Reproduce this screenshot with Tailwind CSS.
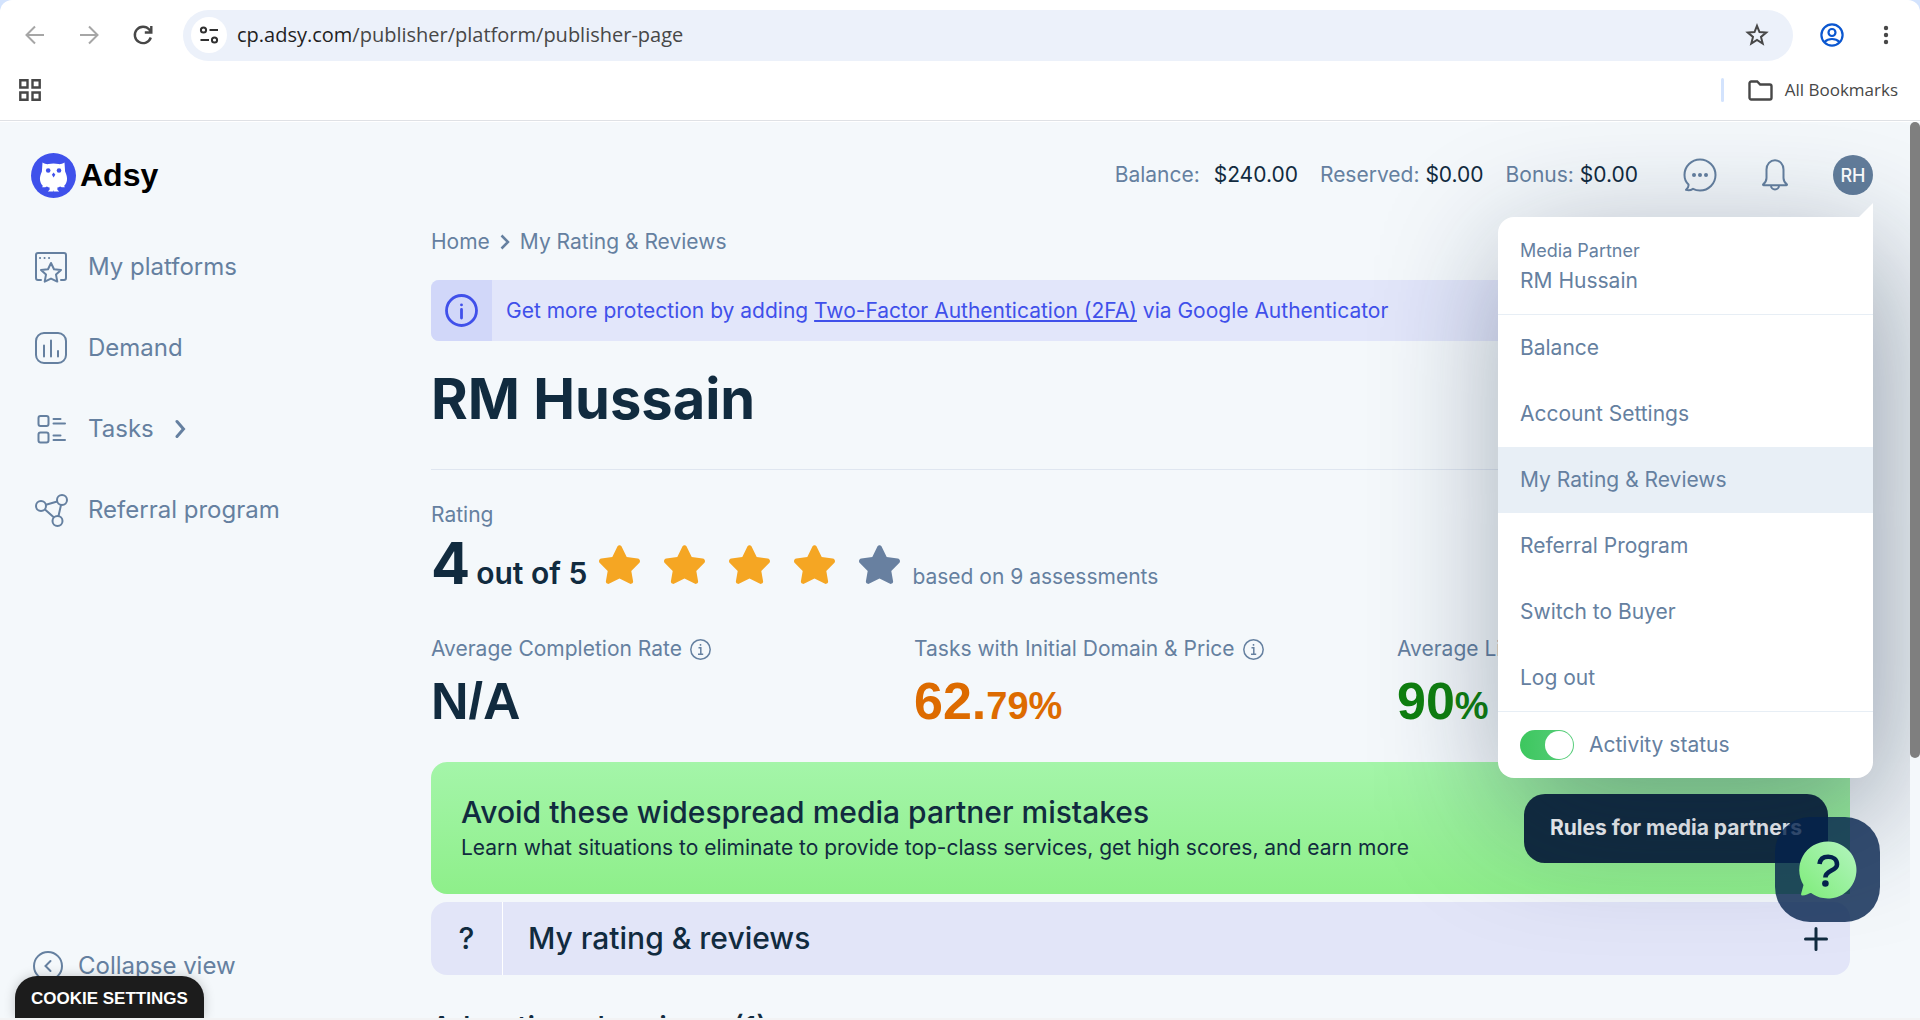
<!DOCTYPE html>
<html lang="en">
<head>
    <meta charset="UTF-8">
    <meta name="viewport" content="width=device-width, initial-scale=1.0">
    <title>My Rating &amp; Reviews - Adsy</title>
    <script src="https://cdn.jsdelivr.net/npm/@tailwindcss/browser@4"></script>
</head>

<body class="flex flex-col h-screen overflow-hidden bg-[#d3e3fd] font-['Inter',sans-serif] text-[#112b3f]">

    <!-- Browser toolbar -->
    <div class="bg-white rounded-t-xl border-b border-[#dfe1e5] shrink-0 font-['Open_Sans',sans-serif]">
        <div class="flex items-center h-[70px] pl-6 pr-[31px]">
            <button aria-label="Back" class="w-[54px] text-[#a6a6a6]">
                <svg width="22" height="22" viewBox="0 0 22 22" fill="none" stroke="currentColor" stroke-width="2"><path d="M20 11H3M11 2.500L2.500 11l8.500 8.500"/></svg>
            </button>
            <button aria-label="Forward" class="w-[54px] text-[#a6a6a6]">
                <svg width="22" height="22" viewBox="0 0 22 22" fill="none" stroke="currentColor" stroke-width="2"><path d="M2 11h17M11 2.500l8.500 8.500-8.500 8.500"/></svg>
            </button>
            <button aria-label="Reload" class="w-[51px] text-[#474747]">
                <svg width="22" height="22" viewBox="0 0 22 22" fill="none" stroke="currentColor" stroke-width="2.400"><path d="M18.800 13.500A8.200 8.200 0 1 1 17.300 5.600L19 7.500M19.300 2v6.500h-6.500"/></svg>
            </button>
            <div class="flex items-center flex-1 h-[51px] rounded-full bg-[#ecf1fa] pl-2 pr-6">
                <button aria-label="View site information" class="flex items-center justify-center size-9 rounded-full bg-white text-[#303030]">
                    <svg width="20" height="20" viewBox="0 0 20 20" fill="none" stroke="currentColor" stroke-width="2"><circle cx="4.500" cy="5" r="2.600"/><path d="M10.500 5H19M1.500 15H10"/><circle cx="15.500" cy="15" r="2.600"/></svg>
                </button>
                <input type="text" aria-label="Address" class="sr-only" value="cp.adsy.com/publisher/platform/publisher-page">
                <div class="flex-1 pl-[10px] text-[20px] text-[#1f1f1f]">cp.adsy.com<span class="text-[#474747]">/publisher/platform/publisher-page</span></div>
                <button aria-label="Bookmark this tab" class="text-[#474747]">
                    <svg width="24" height="24" viewBox="0 0 24 24" fill="none" stroke="currentColor" stroke-width="2"><path d="M12 2.800l2.500 6.300 6.700.5-5.200 4.300 1.700 6.600L12 16.900l-5.700 3.600L8 13.900 2.800 9.600l6.700-.5z"/></svg>
                </button>
            </div>
            <button aria-label="Profile" class="ml-[27px] text-[#0b57d0]">
                <svg width="24" height="24" viewBox="0 0 24 24" fill="none" stroke="currentColor" stroke-width="2.200"><circle cx="12" cy="12" r="10.600"/><circle cx="12" cy="9.500" r="3.500"/><path d="M4.500 19c4-4 11-4 15 0"/></svg>
            </button>
            <button aria-label="Menu" class="ml-[39px] text-[#474747]">
                <svg width="6" height="22" viewBox="0 0 6 22" fill="currentColor"><circle cx="3" cy="4" r="2.200"/><circle cx="3" cy="11" r="2.200"/><circle cx="3" cy="18" r="2.200"/></svg>
            </button>
        </div>
        <div class="flex items-center justify-between h-10 pl-[19px] pr-[22px] mb-[10px]">
            <button aria-label="Apps" class="text-[#474747]">
                <svg width="22" height="22" viewBox="0 0 22 22" fill="none" stroke="currentColor" stroke-width="2.400"><path d="M1.300 1.300h7.200v7.200H1.300zM13.500 1.300h7.200v7.200h-7.200zM1.300 13.500h7.200v7.200H1.300zM13.500 13.500h7.200v7.200h-7.200z"/></svg>
            </button>
            <div class="flex items-center">
                <div class="w-[3px] h-6 rounded bg-[#d3e3fd] mr-6"></div>
                <button class="flex items-center gap-3 text-[17px] text-[#474747]">
                    <svg width="25" height="21" viewBox="0 0 25 21" fill="none" stroke="currentColor" stroke-width="2.400"><path d="M1.500 3.200a1.700 1.700 0 0 1 1.700-1.700h6l3 3h9.600a1.700 1.700 0 0 1 1.700 1.700v11.600a1.700 1.700 0 0 1-1.700 1.700H3.200a1.700 1.700 0 0 1-1.700-1.700z"/></svg>
                    All Bookmarks
                </button>
            </div>
        </div>
    </div>

    <!-- Page -->
    <div class="flex flex-1 min-h-0 bg-[#f4f8fb] border-t border-white border-b-2 border-b-[#f2f3f4]">
        <div class="relative flex flex-col flex-1 min-w-0 overflow-hidden">

            <header class="flex items-center justify-between shrink-0 h-[104px] pt-0.5 pl-[31px] pr-[37px]">
                <a href="#" class="flex items-center gap-1 text-black">
                    <svg width="45" height="45" viewBox="0 0 45 45">
                        <circle cx="22.500" cy="22.500" r="22.500" fill="#3f51eb"/>
                        <path fill="#fff" d="M11.500 9.500c2 1.200 4 1.800 6 1.600 3-.7 7-.7 10 0 2 .2 4-.4 6-1.600l.6 9c1.300 3 2.400 6 1.800 9-.4 2.300-1.300 4-2.700 5.200l.6 1.600c-2 .2-3.500-.1-4.700-.8-1 .6-1.800.9-2.700 1.100v2.200l1.800 1.700h-5.400l-.3-1.500-.3 1.500h-5.400l1.800-1.700v-2.200c-.9-.2-1.700-.5-2.700-1.100-1.200.7-2.700 1-4.700.8l.6-1.600c-1.400-1.200-2.300-2.900-2.700-5.200-.6-3 .5-6 1.800-9z"/>
                        <circle cx="17.200" cy="17.500" r="2.300" fill="#3f51eb"/>
                        <circle cx="28" cy="17.500" r="2.300" fill="#3f51eb"/>
                        <path fill="#3f51eb" d="M22.600 19.500l1.700 2.200-1.700 2.800-1.700-2.800z"/>
                    </svg>
                    <span class="text-[32px] font-bold font-['Liberation_Sans',sans-serif]">Adsy</span>
                </a>
                <div class="flex items-center text-[21px] text-[#6580a0]">
                    <div class="mr-[22px]">Balance: <span class="ml-2 text-[#112b3f]">$240.00</span></div>
                    <div class="mr-[22px]">Reserved: <span class="text-[#112b3f]">$0.00</span></div>
                    <div>Bonus: <span class="text-[#112b3f]">$0.00</span></div>
                    <button aria-label="Messages" class="ml-[45px]">
                        <svg width="34" height="34" viewBox="0 0 34 34" fill="none" stroke="currentColor" stroke-width="2"><path d="M5.500 26.500C2.500 23.800 1.500 20.500 1.500 17a15.500 15.500 0 1 1 15.500 15.500c-2.700 0-5-.6-7-1.700-2 1.300-4.800 1.700-7 1 2-1.400 2.700-3.200 2.500-5.300z" stroke-linejoin="round"/><g fill="currentColor" stroke="none"><circle cx="11" cy="17" r="2"/><circle cx="17" cy="17" r="2"/><circle cx="23" cy="17" r="2"/></g></svg>
                    </button>
                    <button aria-label="Notifications" class="ml-11">
                        <svg width="28" height="32" viewBox="0 0 28 32" fill="none" stroke="currentColor" stroke-width="2" stroke-linejoin="round"><path d="M5.500 19V10.500a8.500 9.300 0 0 1 17 0V19c0 3 1 4.500 3.500 6.500 0 .6-.2.700-.5.700h-23c-.3 0-.5-.1-.5-.7C4.500 23.500 5.500 22 5.500 19zM10 26.500a4 4 0 0 0 8 0"/></svg>
                    </button>
                    <div class="relative ml-11">
                        <button class="flex items-center justify-center size-10 rounded-full bg-[#627d9b] text-white text-[18px] font-medium">RH</button>

                        <!-- Account menu -->
                        <div class="absolute z-20 right-0 top-[62px] w-[375px] bg-white rounded-2xl rounded-tr-none shadow-[12px_35px_130px_rgba(16,35,64,0.42)]">
                            <svg class="absolute right-0 -top-[14px]" width="15" height="15" viewBox="0 0 15 15" fill="#fff"><path d="M15 0v15H0z"/></svg>
                            <div class="px-[22px] pt-5 pb-[17px] border-b border-[#e7eef5]">
                                <div class="text-[18px] leading-7">Media Partner</div>
                                <div class="leading-8">RM Hussain</div>
                            </div>
                            <nav class="flex flex-col border-b border-[#e7eef5]">
                                <a href="#" class="flex items-center h-[66px] px-[22px]">Balance</a>
                                <a href="#" class="flex items-center h-[66px] px-[22px]">Account Settings</a>
                                <a href="#" class="flex items-center h-[66px] px-[22px] bg-[#e8eff6]">My Rating &amp; Reviews</a>
                                <a href="#" class="flex items-center h-[66px] px-[22px]">Referral Program</a>
                                <a href="#" class="flex items-center h-[66px] px-[22px]">Switch to Buyer</a>
                                <a href="#" class="flex items-center h-[66px] px-[22px]">Log out</a>
                            </nav>
                            <label class="flex items-center gap-[15px] h-[66px] px-[22px]">
                                <input type="checkbox" checked class="peer sr-only">
                                <span class="flex items-center justify-end w-[54px] h-[30px] pr-px rounded-full bg-linear-to-r from-[#3cc75e] to-[#58cd7b]"><span class="size-7 rounded-full bg-white"></span></span>
                                Activity status
                            </label>
                        </div>
                    </div>
                </div>
            </header>

            <div class="flex flex-1 min-h-0">
                <aside class="flex flex-col justify-between shrink-0 w-[431px] pl-[35px] pb-[22px] text-[24px] text-[#6580a0]">
                    <nav class="flex flex-col">
                        <a href="#" class="flex items-center gap-[21px] h-[81px]">
                            <svg width="32" height="32" viewBox="0 0 32 32" fill="none" stroke="currentColor" stroke-width="2" stroke-linejoin="round" stroke-linecap="round"><path d="M6 29H3a2 2 0 0 1-2-2V4a2 2 0 0 1 2-2h26a2 2 0 0 1 2 2v23a2 2 0 0 1-2 2h-3"/><path d="M16 12l3 6.200 7 .8-5 4.600 1.300 7L16 27.600l-6.300 3 1.300-7-5-4.600 7-.8z"/><path d="M5 7h.1M9.500 7h.1M14 7h.1"/></svg>
                            My platforms
                        </a>
                        <a href="#" class="flex items-center gap-[21px] h-[81px]">
                            <svg width="32" height="32" viewBox="0 0 32 32" fill="none" stroke="currentColor" stroke-width="2" stroke-linecap="round"><rect x="1" y="1" width="30" height="30" rx="8"/><path d="M9 13.500v11M16 8.500v16M23 19v5.500"/></svg>
                            Demand
                        </a>
                        <a href="#" class="flex items-center gap-[21px] h-[81px]">
                            <svg width="32" height="32" viewBox="0 0 32 32" fill="none" stroke="currentColor" stroke-width="2" stroke-linecap="round"><rect x="3.500" y="3" width="10" height="10" rx="2"/><rect x="3.500" y="19.500" width="10" height="10" rx="2"/><path d="M18.500 6h7M18.500 10.500h11.500M18.500 22.500h7M18.500 27h11.500"/></svg>
                            Tasks
                            <svg width="11" height="20" viewBox="0 0 11 20" fill="none" stroke="currentColor" stroke-width="3" stroke-linecap="round"><path d="M2 2.500L8.500 10 2 17.500"/></svg>
                        </a>
                        <a href="#" class="flex items-center gap-[21px] h-[81px]">
                            <svg width="34" height="34" viewBox="0 0 34 34" fill="none" stroke="currentColor" stroke-width="2" class="-mr-0.5"><circle cx="6" cy="13" r="5"/><circle cx="27" cy="7" r="5"/><circle cx="22.500" cy="28" r="5"/><path d="M11 11.700l11.200-3.200M10 16.500l9 8M26 12l-2.500 11"/></svg>
                            Referral program
                        </a>
                    </nav>
                    <button class="flex items-center gap-[15px] h-[60px] -ml-0.5">
                        <svg width="30" height="30" viewBox="0 0 30 30" fill="none" stroke="currentColor" stroke-width="2" stroke-linecap="round"><circle cx="15" cy="15" r="14"/><path d="M17.500 10l-5 5 5 5"/></svg>
                        Collapse view
                    </button>
                </aside>

                <main class="flex-1 min-w-0 pt-0.5 pr-[60px]">
                    <div class="flex items-center gap-[10px] text-[21px] leading-7 text-[#6580a0]">
                        <a href="#">Home</a>
                        <svg width="10" height="16" viewBox="0 0 10 16" fill="none" stroke="currentColor" stroke-width="2.500"><path d="M1.500 1.500L8 8l-6.500 6.500"/></svg>
                        <span>My Rating &amp; Reviews</span>
                    </div>

                    <div class="flex mt-6 h-[61px] rounded-lg overflow-hidden bg-[#e2e6fa] text-[#4050ea]">
                        <div class="flex items-center justify-center w-[61px] bg-[#d1d7f9]">
                            <svg width="33" height="33" viewBox="0 0 33 33" fill="none" stroke="currentColor" stroke-width="2.800" stroke-linecap="round"><circle cx="16.500" cy="16.500" r="15"/><path d="M16.500 15.500v8.500M16.500 10.800v.1"/></svg>
                        </div>
                        <p class="flex-1 self-center pl-[14px] text-[21px] whitespace-nowrap">Get more protection by adding <a href="#" class="underline decoration-2 underline-offset-2">Two-Factor Authentication (2FA)</a> via Google Authenticator</p>
                    </div>

                    <h1 class="mt-6 pb-9 border-b border-[#dfe6f0] text-[56px] leading-[68px] font-bold">RM Hussain</h1>

                    <div class="mt-[31px] text-[21px] leading-7 text-[#6580a0]">Rating</div>
                    <div class="flex items-baseline mt-1 h-[60px]">
                        <span class="text-[58px] leading-[60px] font-bold">4</span>
                        <span class="ml-1.5 text-[30px] font-semibold">out of 5</span>
                        <div class="flex gap-6 ml-3 text-[#f5a623]">
                            <svg width="41" height="39" viewBox="0 0 41 39" fill="currentColor"><path id="star" d="M18.300 1.800c.9-2 3.500-2 4.400 0l5 10.200 11 1.600c2.300.4 3 2.900 1.500 4.500l-7.900 7.900 1.800 10.200c.3 2-1.700 3.300-3.500 2.400L20.500 33.500l-10.100 5.100c-1.800.9-3.800-.4-3.500-2.400L8.700 26 .8 18.100c-1.500-1.600-.8-4.100 1.500-4.500l11-1.600z"/></svg>
                            <svg width="41" height="39" viewBox="0 0 41 39" fill="currentColor"><use href="#star"/></svg>
                            <svg width="41" height="39" viewBox="0 0 41 39" fill="currentColor"><use href="#star"/></svg>
                            <svg width="41" height="39" viewBox="0 0 41 39" fill="currentColor"><use href="#star"/></svg>
                            <svg width="41" height="39" viewBox="0 0 41 39" fill="#6880a0"><use href="#star"/></svg>
                        </div>
                        <span class="ml-3 text-[21px] text-[#6580a0]">based on 9 assessments</span>
                    </div>

                    <div class="grid grid-cols-3 gap-[30px] mt-[42px]">
                        <div>
                            <div class="flex items-center gap-2 text-[21px] leading-7 text-[#6580a0]">
                                Average Completion Rate
                                <svg width="21" height="21" viewBox="0 0 21 21" fill="none" stroke="currentColor" stroke-width="1.500"><circle cx="10.500" cy="10.500" r="9.700"/><path d="M8.500 8.800h2.300V15M8 15.200h5.200M10.500 5v1.800"/></svg>
                            </div>
                            <div class="mt-2 text-[52px] leading-[60px] font-bold font-['Liberation_Sans',sans-serif]">N/A</div>
                        </div>
                        <div>
                            <div class="flex items-center gap-2 text-[21px] leading-7 text-[#6580a0]">
                                Tasks with Initial Domain &amp; Price
                                <svg width="21" height="21" viewBox="0 0 21 21" fill="none" stroke="currentColor" stroke-width="1.500"><circle cx="10.500" cy="10.500" r="9.700"/><path d="M8.500 8.800h2.300V15M8 15.200h5.200M10.500 5v1.800"/></svg>
                            </div>
                            <div class="mt-2 text-[52px] leading-[60px] font-bold font-['Liberation_Sans',sans-serif] text-[#dd6b00]">62.<span class="text-[38px]">79%</span></div>
                        </div>
                        <div>
                            <div class="flex items-center gap-2 text-[21px] leading-7 text-[#6580a0] whitespace-nowrap">
                                Average Link Lifetime
                            </div>
                            <div class="mt-2 text-[52px] leading-[60px] font-bold font-['Liberation_Sans',sans-serif] text-[#0f800f]">90<span class="text-[38px]">%</span></div>
                        </div>
                    </div>

                    <div class="flex items-center justify-between mt-[26px] h-[132px] pl-[30px] pr-[22px] rounded-l-2xl bg-linear-to-b from-[#a4f5a9] to-[#8eef8a]">
                        <div>
                            <h2 class="text-[30px] leading-10 font-medium">Avoid these widespread media partner mistakes</h2>
                            <p class="text-[21px] leading-8">Learn what situations to eliminate to provide top-class services, get high scores, and earn more</p>
                        </div>
                        <button class="h-[69px] px-[26px] rounded-[21px] bg-[#112b3f] text-white text-[21px] font-bold whitespace-nowrap">Rules for media partners</button>
                    </div>

                    <button class="flex items-center w-full mt-2 h-[73px] rounded-2xl bg-[#e2e5f8] text-[30px] font-medium text-left">
                        <span class="flex items-center justify-center w-[72px] h-full border-r border-white">?</span>
                        <span class="flex-1 pl-[25px]">My rating &amp; reviews</span>
                        <svg class="mr-[22px]" width="24" height="24" viewBox="0 0 24 24" fill="none" stroke="currentColor" stroke-width="3" stroke-linecap="round"><path d="M12 1.500v21M1.500 12h21"/></svg>
                    </button>

                    <h2 class="mt-8 text-[30px] leading-10 font-medium">Advertisers' reviews (1)</h2>
                </main>
            </div>

            <button class="absolute left-[15px] bottom-0 h-[42px] px-4 pt-1 rounded-t-[22px] bg-[#1c1c1c] text-white text-[17px] font-bold font-['Liberation_Sans',sans-serif] shadow-[0_0_12px_rgba(0,0,0,0.2)]">COOKIE SETTINGS</button>

            <button aria-label="Help" class="absolute z-30 right-[30px] bottom-24 flex items-center justify-center size-[105px] rounded-[35px] bg-[#04224c]/80">
                <svg width="58" height="58" viewBox="0 0 58 58">
                    <defs>
                        <linearGradient id="bubble" x1="1" y1="0" x2="0" y2="1"><stop offset="0" stop-color="#b4f5c0"/><stop offset="1" stop-color="#7dec78"/></linearGradient>
                    </defs>
                    <path fill="url(#bubble)" d="M29 .5a28.500 28.500 0 1 1-17 51.400c-2.500.3-5 2.600-9 2.600-1-.2-1-1-.8-2L4.500 44A28.500 28.500 0 0 1 29 .5z"/>
                    <path d="M20.500 23c.6-5 4-7.300 8.700-7.300 5 0 8.800 2.800 8.800 7.700 0 6.600-11.600 5.800-11.600 13" fill="none" stroke="#04224c" stroke-width="4.600"/>
                    <circle cx="26.400" cy="42.500" r="3.300" fill="#04224c"/>
                </svg>
            </button>
        </div>

        <!-- Scrollbar -->
        <div class="w-[10px] shrink-0">
            <div class="h-[71%] rounded-full bg-[#7f7f7f]"></div>
        </div>
    </div>
</body>
</html>
